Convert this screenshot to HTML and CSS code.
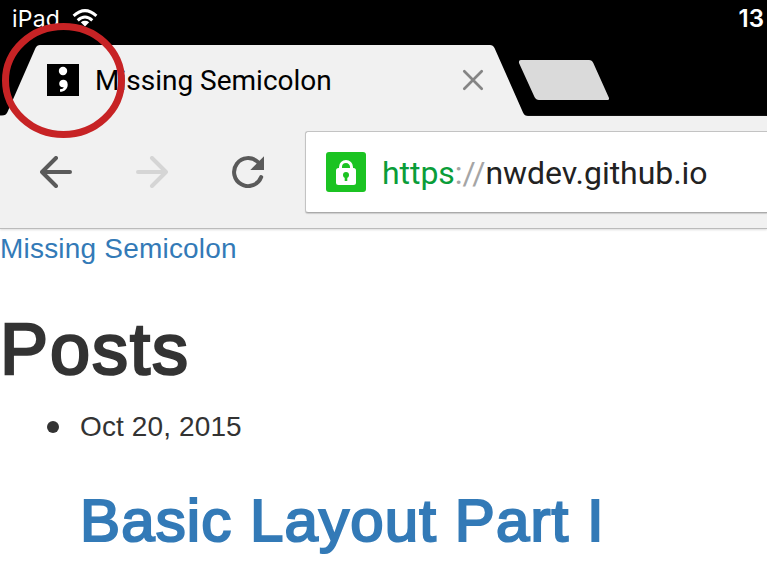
FILE: index.html
```html
<!DOCTYPE html>
<html lang="en">
<head>
<meta charset="utf-8">
<title>Missing Semicolon</title>
<link rel="stylesheet" href="styles.css">
</head>
<body>
<header class="browser">
  <div class="status">
    <span class="device">iPad</span>
    <svg class="wifi" width="26" height="20" viewBox="0 0 26 20"><g fill="none" stroke="#fff" stroke-width="3"><path d="M1.600 7.800Q13 -2.500 24.400 7.800"/><path d="M5.700 12.300Q13 5.700 20.300 12.300"/></g><path d="M8.800 14.200Q13 11.400 17.200 14.200L13 18.600Z" fill="#fff"/></svg>
    <span class="clock">13</span>
  </div>
  <div class="tabs">
    <svg class="tab-shape" width="767" height="71" viewBox="0 0 767 71"><path d="M0 71V70.5H2Q6 70.5 7.5 67L35.5 3Q37 0 40 0H490Q493 0 494.500 3L523 67.500Q524.500 71 528 71Z" fill="#f1f1f1"/><path d="M521 15H589Q592 15 593.300 18L609 53Q609.500 55 607 55H539Q536 55 534.500 52L519 18Q518.500 15 521 15Z" fill="#dadada"/></svg>
    <div class="tab">
      <svg class="favicon" width="32" height="32" viewBox="0 0 32 32"><path d="M0 0H32V32H0Z"/><circle cx="16" cy="7" r="4.200" fill="#fff"/><path d="M12.200 19.800C12 14.600 20.700 14.200 20.700 20.400C20.700 25 17.500 27.600 13 27.800V25.200C15.300 25 16.500 24.400 16.700 23.200C14 23.600 12.300 22.300 12.200 19.800Z" fill="#fff"/></svg>
      <span class="tab-title">Missing Semicolon</span>
      <svg class="close" width="22" height="22" viewBox="0 0 22 22"><path d="M2.300 2.300L19.700 19.700M19.700 2.300L2.300 19.700" stroke="#858585" stroke-width="2.700" stroke-linecap="round"/></svg>
    </div>
  </div>
  <div class="toolbar">
    <svg width="32" height="32" viewBox="0 0 32 32"><path d="M16 2L2 16L16 30M2 16H30" fill="none" stroke="#5a5a5a" stroke-width="4" stroke-linecap="round" stroke-linejoin="round"/></svg>
    <svg width="32" height="32" viewBox="0 0 32 32"><path d="M16 2L30 16L16 30M30 16H2" fill="none" stroke="#d5d5d5" stroke-width="4" stroke-linecap="round" stroke-linejoin="round"/></svg>
    <svg width="32" height="32" viewBox="0 0 32 32"><path d="M26 6.200A14 14 0 1 0 29.200 21" fill="none" stroke="#5a5a5a" stroke-width="4" stroke-linecap="round"/><path d="M32 .3V14H18.300Z" fill="#5a5a5a"/></svg>
    <div class="omnibox">
      <svg class="lock" width="40" height="40" viewBox="0 0 40 40"><rect width="40" height="40" rx="3" fill="#1bc322"/><path d="M14.500 18V15A5.500 5.500 0 0 1 25.500 15V18" fill="none" stroke="#fff" stroke-width="3"/><rect x="10" y="16" width="20" height="17" rx="2.500" fill="#fff"/><circle cx="20" cy="23" r="3" fill="#1bc322"/><path d="M18.700 24H21.300V29H18.700Z" fill="#1bc322"/></svg>
      <span class="url"><span class="scheme">https</span><span class="slashes">://</span>nwdev.github.io</span>
    </div>
  </div>
</header>
<main>
  <a class="site-title">Missing Semicolon</a>
  <h1>Posts</h1>
  <ul class="posts">
    <li><span class="date">Oct 20, 2015</span>
      <h2><a>Basic Layout Part I</a></h2>
    </li>
  </ul>
</main>
<svg class="ring" width="126" height="118" viewBox="0 0 126 118"><ellipse cx="63.500" cy="59.500" rx="58" ry="54" fill="none" stroke="#c72325" stroke-width="7"/></svg>
</body>
</html>
```
FILE: styles.css
```css
* { box-sizing: border-box; }
body {
  margin: 0;
  width: 767px;
  height: 574px;
  overflow: hidden;
  background: #fff;
  color: #333;
  font: 28px/40px "Liberation Sans", Arial, sans-serif;
}
svg { display: block; flex: none; }
.browser { background: #000; }
.status {
  display: flex;
  height: 45px;
  padding: 0 3px 0 12px;
  color: #fff;
  font: 23px/38px Inter, sans-serif;
}
.device { width: 60px; letter-spacing: .2px; }
.wifi { margin-top: 8px; }
.clock { margin-left: auto; font-size: 24px; font-weight: 600; }
.tabs { display: grid; height: 71px; }
.tab-shape, .tab { grid-area: 1 / 1; }
.tab {
  display: flex;
  align-items: center;
  width: 484px;
  height: 70px;
  padding-left: 47px;
  color: #000;
  font: 28px/36px Roboto, sans-serif;
}
.tab-title { margin-left: 16px; padding-top: 2px; white-space: nowrap; }
.close { margin-left: auto; }
.toolbar {
  display: flex;
  align-items: center;
  gap: 64px;
  height: 113px;
  padding-left: 40px;
  background: #f1f1f1;
  border-bottom: 1px solid #bbb;
  box-shadow: 0 1px 2px #ddd;
}
.omnibox {
  display: flex;
  align-items: center;
  flex: 1;
  height: 82px;
  margin-left: -23px;
  padding-left: 20px;
  background: #fff;
  border: 1px solid #c3c3c3;
  border-right: 0;
  border-bottom-color: #aaa;
  border-radius: 3px 0 0 3px;
  box-shadow: 0 1px 1px #ccc;
}
.url {
  margin-left: 16px;
  padding-top: 2px;
  color: #222;
  font: 32px/40px Roboto, sans-serif;
  letter-spacing: -.04px;
  white-space: nowrap;
}
.scheme { color: #0a9d39; }
.slashes { color: #a5a5a5; }
a { color: #337ab7; }
.site-title { display: block; letter-spacing: .2px; }
h1, h2 { margin: 40px 0 20px; font-weight: 400; line-height: 1.1; }
h1 { margin: 41px 0 18px; font-size: 72px; letter-spacing: 2px; -webkit-text-stroke: 2.6px; }
h2 { margin-top: 41px; font-size: 60px; letter-spacing: 1.12px; -webkit-text-stroke: 2.2px; }
.posts { margin: 0; padding-left: 80px; list-style: none; }
.date { letter-spacing: .12px; }
.posts li::before {
  content: "";
  float: left;
  width: 12px;
  height: 12px;
  margin: 14px 0 0 -33px;
  border-radius: 50%;
  background: #333;
}
.ring { position: absolute; left: 0; top: 21px; }
```
